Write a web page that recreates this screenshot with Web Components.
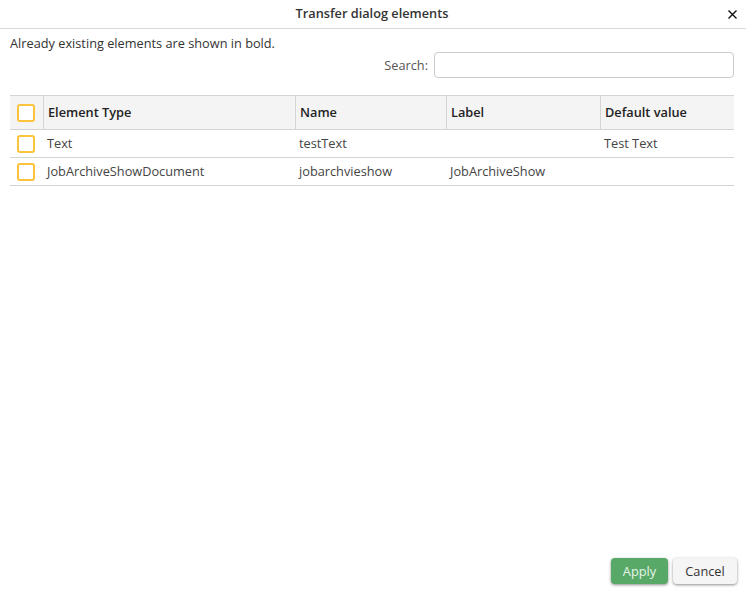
<!DOCTYPE html>
<html>
<head>
<meta charset="utf-8">
<style>
    html, body { margin: 0; height: 100%; background: #fff; }
    body { font-family: "Open Sans", sans-serif; font-size: 12.75px; color: #333; }
</style>
</head>
<body>
<template id='dlg-window-template'>
    <style>
        :host {
            display: flex;
            flex-direction: column;
            height: 597px;
            box-sizing: border-box;
        }
        #title {
            flex: none;
            height: 26px;
            padding: 0 2px 2px 0;
            border-bottom: 1px solid #d9d9d9;
            display: flex;
            align-items: center;
            justify-content: center;
            position: relative;
            font-weight: 600;
            color: #333;
        }
        #close {
            position: absolute;
            right: 9px;
            top: 10px;
            width: 9px;
            height: 9px;
        }
        #body { flex: 1; padding: 0 12px 0 10px; min-height: 0; }
        #footer {
            flex: none;
            display: flex;
            justify-content: flex-end;
            gap: 5px;
            padding: 0 9px 13px 0;
        }
    </style>
    <div id='title'>
        <span id='title-text'></span>
        <svg id='close' viewBox="0 0 9 9"><path d="M.5.5l8 8M8.500.5l-8 8" stroke="#111" stroke-width="1.4" fill="none"/></svg>
    </div>
    <div id='body'><slot></slot></div>
    <div id='footer'><slot name='footer'></slot></div>
</template>

<template id='dlg-search-template'>
    <style>
        :host {
            display: flex;
            justify-content: flex-end;
            align-items: center;
            gap: 6px;
            height: 26px;
            margin-top: 1px;
            color: #555;
        }
        input {
            width: 300px;
            height: 26px;
            box-sizing: border-box;
            border: 1px solid #ccc;
            border-radius: 4px;
            background: #fff;
            outline: none;
            padding: 0 6px;
        }
    </style>
    <label for='q'>Search:</label>
    <input id='q' type='text'>
</template>

<template id='dlg-check-template'>
    <style>
        :host {
            display: block;
            width: 18px;
            height: 18px;
            box-sizing: border-box;
            border: 2px solid #fcc33c;
            border-radius: 3px;
            background: #fff;
        }
    </style>
</template>

<template id='dlg-row-template'>
    <style>
        :host {
            display: grid;
            grid-template-columns: 33px 252px 151px 154px 134px;
            height: 28px;
            box-sizing: border-box;
            border-bottom: 1px solid #d4d4d4;
            align-items: center;
            color: #444;
        }
        :host([head]) {
            height: 35px;
            border-top: 1px solid #d4d4d4;
            background: #f4f4f4;
            font-weight: 600;
            color: #222;
        }
        .cell {
            height: 100%;
            display: flex;
            align-items: center;
            box-sizing: border-box;
            padding: 0 0 1px 4px;
            white-space: nowrap;
        }
        :host([head]) .cell { border-left: 1px solid #d4d4d4; }
        .cell.check, :host([head]) .cell.check { border-left: 0; padding: 1px 0 0 7px; }
    </style>
    <div class='cell check'><dlg-check></dlg-check></div>
</template>

<template id='dlg-button-template'>
    <style>
        :host {
            display: inline-flex;
            align-items: center;
            justify-content: center;
            width: 64px;
            height: 26px;
            box-sizing: border-box;
            border-radius: 4px;
            background: #f5f5f5;
            color: #333;
            box-shadow: 0 1px 3px rgba(0,0,0,.45);
            cursor: pointer;
        }
        :host([primary]) {
            width: 57px;
            background: #58a968;
            color: #e9f5ec;
        }
    </style>
    <slot></slot>
</template>

<dlg-window title-text="Transfer dialog elements">
    <div style="padding-top:6px;line-height:16px">Already existing elements are shown in bold.</div>
    <dlg-search style="display:flex"></dlg-search>
    <div style="height:17px"></div>
    <dlg-row head cells="Element Type|Name|Label|Default value"></dlg-row>
    <dlg-row cells="Text|testText||Test Text"></dlg-row>
    <dlg-row cells="JobArchiveShowDocument|jobarchvieshow|JobArchiveShow|"></dlg-row>
    <dlg-button slot="footer" primary>Apply</dlg-button>
    <dlg-button slot="footer">Cancel</dlg-button>
</dlg-window>

<script>
    // Stamp a template into a fresh open shadow root
    function stamp(el, id) {
        el.attachShadow({mode: 'open'});
        el.shadowRoot.appendChild(document.getElementById(id).content.cloneNode(true));
    }

    class DlgWindow extends HTMLElement {
        constructor() {
            super();
            stamp(this, 'dlg-window-template');
        }
        connectedCallback() {
            this.shadowRoot.getElementById('title-text').textContent = this.getAttribute('title-text');
        }
    }

    class DlgSearch extends HTMLElement {
        constructor() {
            super();
            stamp(this, 'dlg-search-template');
        }
    }

    class DlgCheck extends HTMLElement {
        constructor() {
            super();
            stamp(this, 'dlg-check-template');
        }
    }

    class DlgRow extends HTMLElement {
        constructor() {
            super();
            stamp(this, 'dlg-row-template');
        }
        connectedCallback() {
            // One cell per | separated value
            (this.getAttribute('cells') || '').split('|').forEach(text => {
                var cell = document.createElement('div');
                cell.className = 'cell';
                cell.textContent = text;
                this.shadowRoot.appendChild(cell);
            });
        }
    }

    class DlgButton extends HTMLElement {
        constructor() {
            super();
            stamp(this, 'dlg-button-template');
        }
    }

    window.customElements.define('dlg-check', DlgCheck);
    window.customElements.define('dlg-search', DlgSearch);
    window.customElements.define('dlg-row', DlgRow);
    window.customElements.define('dlg-button', DlgButton);
    window.customElements.define('dlg-window', DlgWindow);
</script>
</body>
</html>
